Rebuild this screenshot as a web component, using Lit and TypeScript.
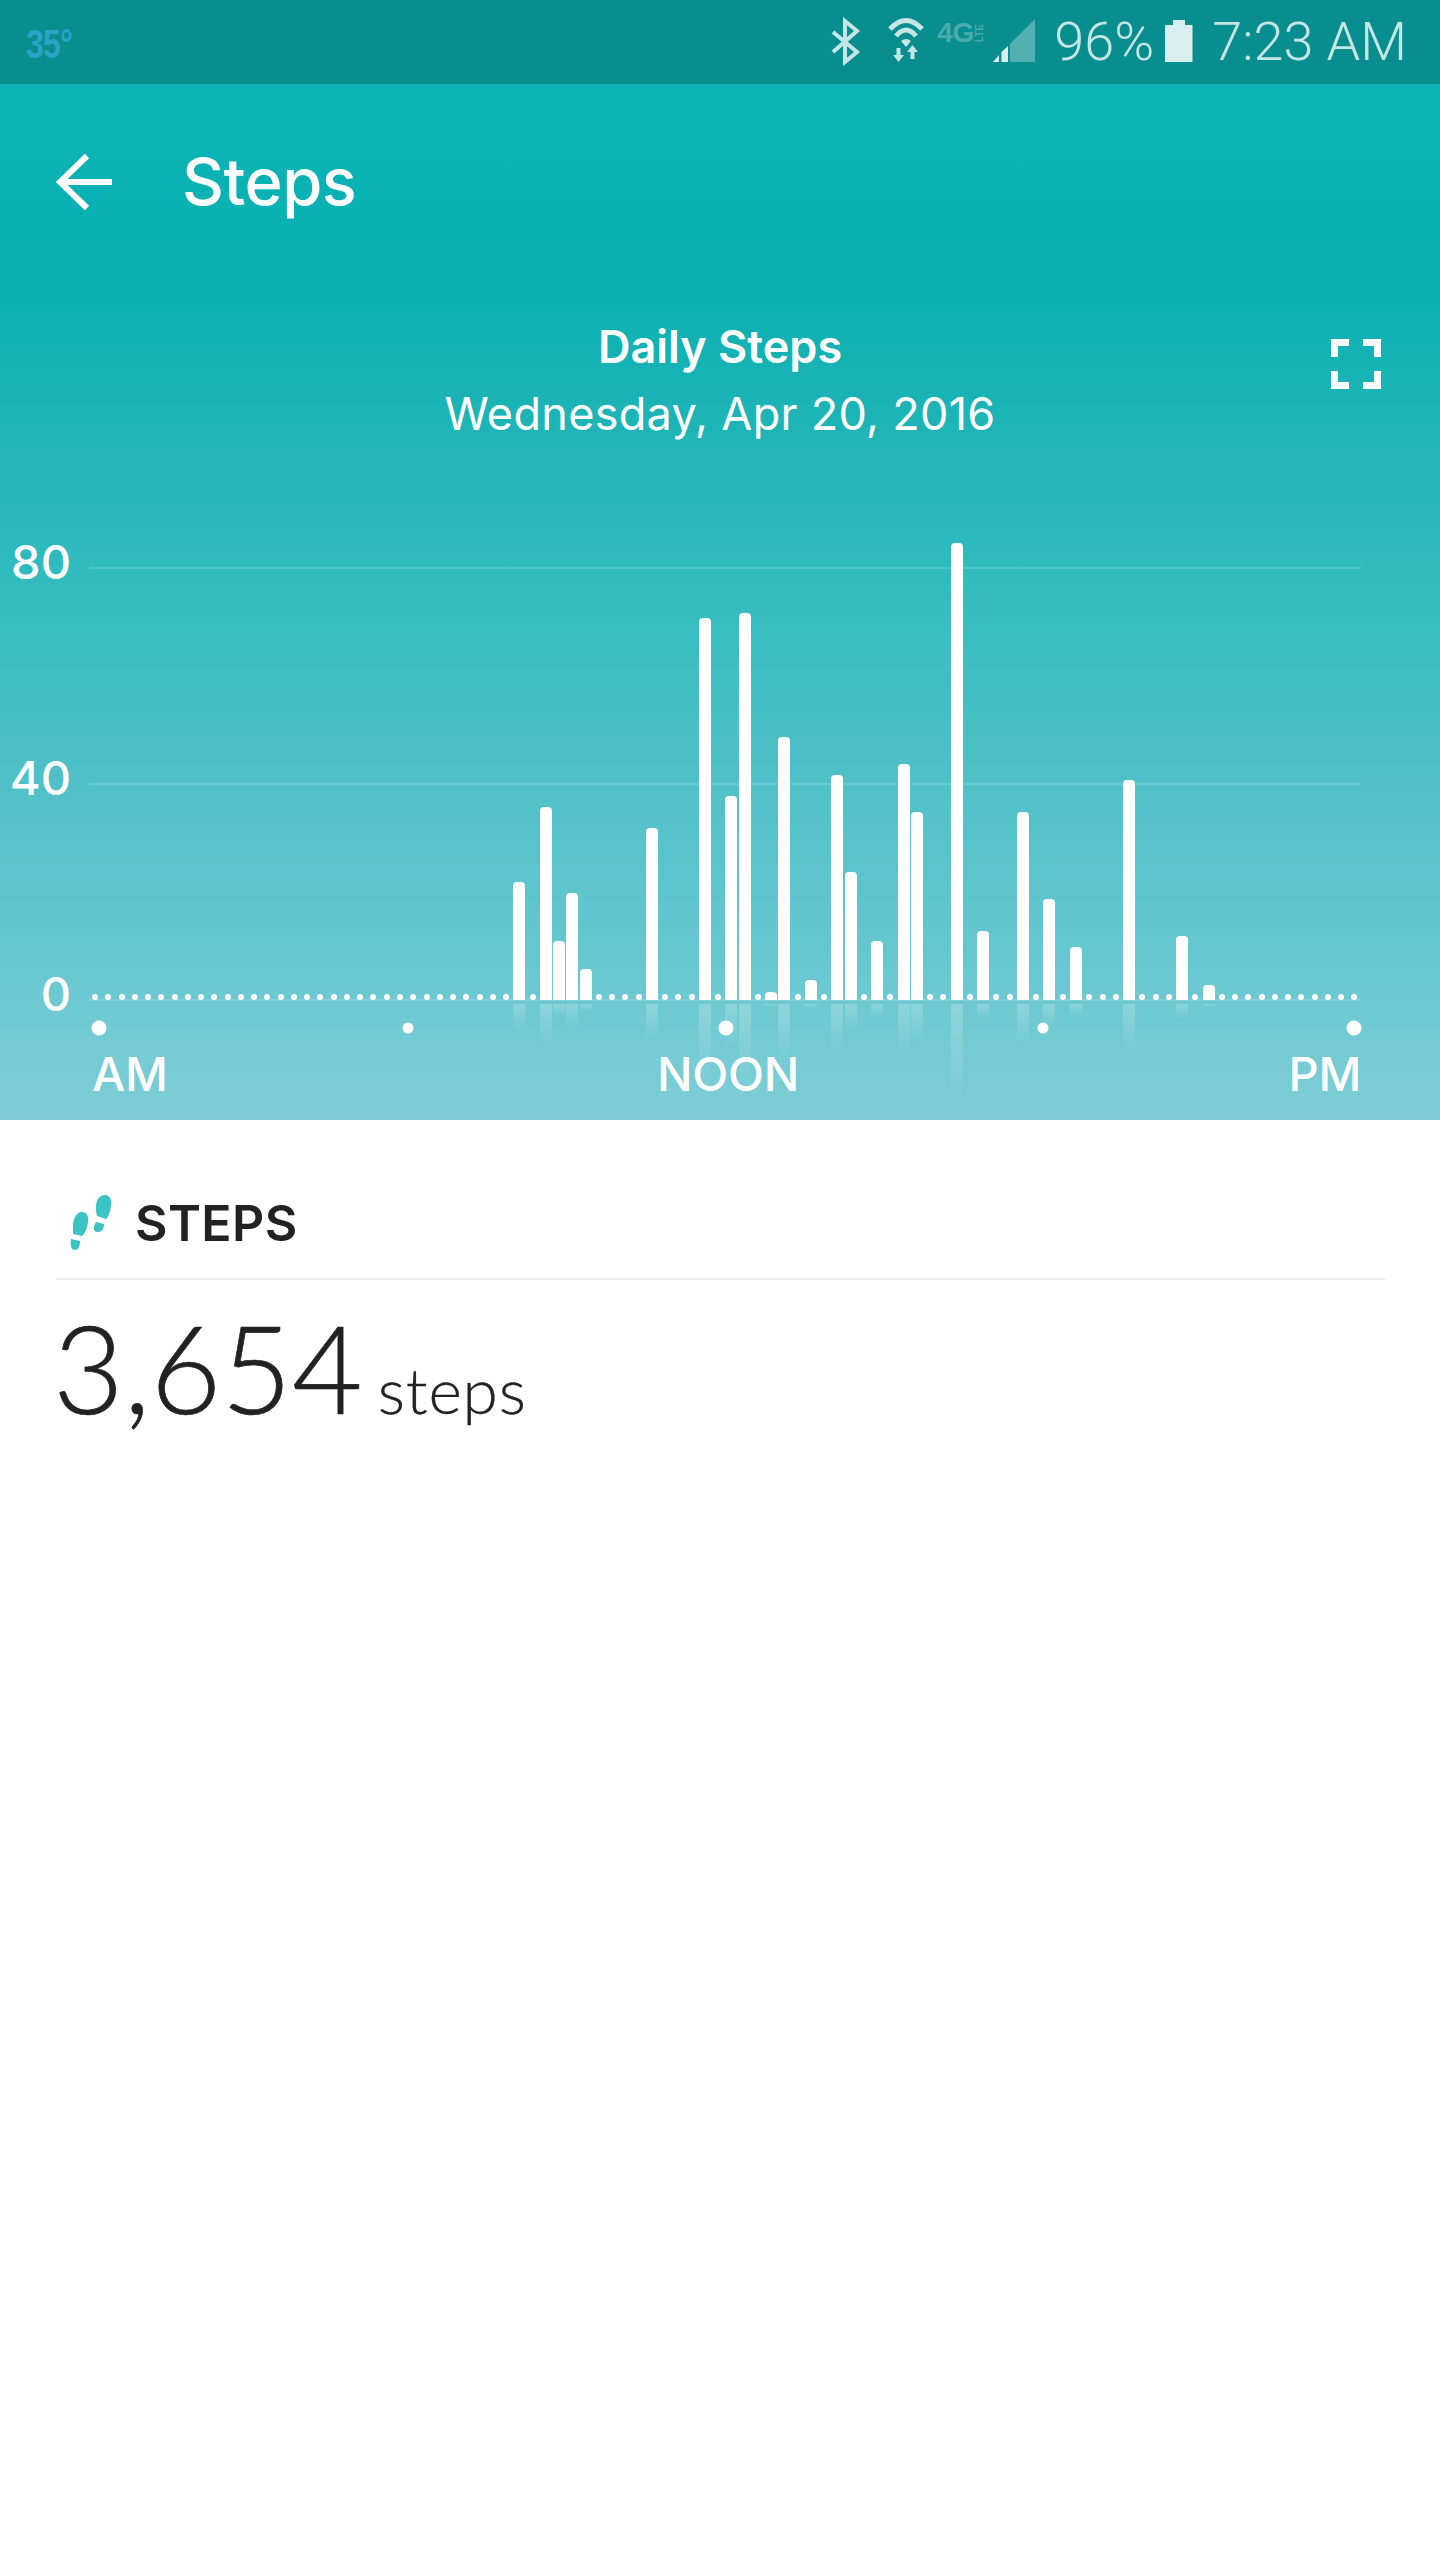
import { LitElement, html, css, svg } from "lit";
import { customElement } from "lit/decorators.js";

const BARS: Record<number, number> = {
  32: 118, 34: 193, 35: 59, 36: 107, 37: 31, 42: 172, 46: 382, 48: 204, 49: 387,
  51: 8, 52: 263, 54: 20, 56: 225, 57: 128, 59: 59, 61: 236, 62: 188, 65: 457,
  67: 69, 70: 188, 72: 101, 74: 53, 78: 220, 82: 64, 84: 15,
};
const COLS = Array.from({ length: 96 }, (_, i) => BARS[i] ?? 0);
const TICKS: [number, boolean][] = [[98.5, true], [408, false], [725.5, true], [1043, false], [1353.5, true]];

@customElement("app-root")
export class AppRoot extends LitElement {
  static styles = css`
    :host { display: block; width: 1440px; height: 2560px; background: #fff; font-family: Inter, Lato, sans-serif; overflow: hidden; }
    .status { height: 84px; background: #098e8f; display: flex; align-items: flex-start; position: relative; }
    .temp { font-family: "Liberation Sans", sans-serif; font-weight: 700; font-size: 40px; line-height: 40px; color: #2ba3c6; margin: 24px 0 0 26px; transform: scaleX(.8); transform-origin: left top; letter-spacing: -1px; }
    .status-right { margin-left: auto; display: flex; align-items: flex-start; height: 84px; }
    .sicon { display: block; }
    .stext { font-family: Roboto, sans-serif; font-weight: 300; font-size: 54px; line-height: 84px; color: #c6e6e6; white-space: nowrap; }
    .lte { display: flex; align-items: flex-start; margin: 20px 0 0 0; color: #4aacac; width: 47px; height: 24px; }
    .lte b { font-family: "Liberation Sans", sans-serif; font-weight: 700; font-size: 28px; line-height: 26px; letter-spacing: -.5px; width: 39px; }
    .lte i { font-family: "Liberation Sans", sans-serif; font-style: normal; font-weight: 700; font-size: 10px; line-height: 8px; writing-mode: vertical-rl; transform: rotate(180deg); margin-top: 4px; }
    .hero { height: 1036px; background: linear-gradient(180deg, #0ab4b5 0%, #0ab0b1 19%, #1ab3b5 30%, #34bcc0 50%, #4fc0c7 67%, #66c7cf 83.6%, #7ecdd6 100%); color: #fff; display: flex; flex-direction: column; }
    .bar-top { height: 196px; display: flex; align-items: center; padding-left: 56px; }
    .back { display: block; margin-right: 68px; }
    .title { font-size: 65px; line-height: 72px; font-weight: 500; letter-spacing: -.5px; }
    .heading { position: relative; height: 125px; text-align: center; padding-top: 38px; }
    .h1 { font-size: 45px; line-height: 58px; font-weight: 600; }
    .h2 { font-size: 45px; line-height: 58px; font-weight: 400; margin-top: 9px; letter-spacing: .3px; }
    .expand { position: absolute; left: 1331px; top: 59px; }
    .plot { position: relative; margin: 99px 0 0 89px; width: 1272px; height: 458px; }
    .cols { display: grid; grid-template-columns: repeat(96, 1fr); height: 458px; align-items: end; margin-left: -.5px; }
    .col { position: relative; display: flex; justify-content: center; }
    .bar { width: 12px; background: #fff; border-radius: 4px 4px 0 0; }
    .dot { width: 6px; height: 6px; border-radius: 50%; background: #fff; }
    .refl { position: absolute; top: calc(100% + 4px); left: 50%; margin-left: -6px; width: 12px; background: linear-gradient(180deg, rgba(255,255,255,.22), rgba(255,255,255,0)); }
    .grid { position: absolute; left: 0; right: 0; height: 2px; background: rgba(255,255,255,.14); }
    .base { position: absolute; left: 0; right: 0; top: 457px; height: 2px; background: rgba(255,255,255,.14); }
    .ylab { position: absolute; right: 100%; margin-right: 18px; font-size: 47px; line-height: 44px; font-weight: 500; }
    .ticks { position: relative; height: 20px; margin-top: 18px; }
    .tick { position: absolute; background: #fff; border-radius: 50%; transform: translate(-50%, -50%); top: 10px; }
    .tick.big { width: 15px; height: 15px; }
    .tick.small { width: 11px; height: 11px; }
    .axis { display: flex; justify-content: space-between; margin: 14px 79px 0 92px; font-size: 47px; line-height: 44px; font-weight: 500; letter-spacing: -.3px; }
    .section { padding: 0 55px 0 56px; }
    .sec-head { height: 160px; display: flex; align-items: center; border-bottom: 2px solid #ececec; padding-top: 48px; box-sizing: border-box; }
    .sec-head svg { display: block; margin-left: 13px; margin-right: 22px; }
    .sec-title { font-size: 50px; line-height: 56px; font-weight: 600; color: #222; letter-spacing: .4px; }
    .value { display: flex; align-items: baseline; color: #222; margin-top: 17px; font-family: Lato, sans-serif; font-weight: 300; margin-left: -3px; }
    .num { font-size: 122px; line-height: 140px; -webkit-text-stroke: .7px #222; }
    .unit { font-size: 64px; line-height: 70px; margin-left: 15px; letter-spacing: .8px; -webkit-text-stroke: .3px #222; }
  `;

  render() {
    return html`
      <div class="status">
        <div class="temp">35°</div>
        <div class="status-right">
          <svg class="sicon" width="108" height="84" viewBox="830 0 108 84">
            ${svg`<path d="M834 32 L858 52 L846 62 V21 L858 31 L834 52" fill="none" stroke="#c6e6e6" stroke-width="4"/>
            <path d="M891 29 Q907 12 923 29 M897 36 Q907 24 917 36" fill="none" stroke="#c6e6e6" stroke-width="5"/>
            <path d="M902 41 Q907 37 912 41 L907 47 Z" fill="#c6e6e6"/>
            <path d="M897.500 48 H901.500 V55 H905 L899.500 62 L894 55 H897.500 Z M911.500 59 H915.500 V52 H919 L913.500 45 L908 52 H911.500 Z" fill="#c6e6e6"/>`}
          </svg>
          <div class="lte"><b>4G</b><i>LTE</i></div>
          <svg class="sicon" width="43" height="84" viewBox="995 0 43 84" style="margin-left:9px">
            ${svg`<path d="M995 62 L1001 55 V62 Z M1003.500 62 V52 L1010 46 V62 Z" fill="#d9eeee"/>
            <path d="M1012 62 V44 L1037 19 V62 Z" fill="#52b0b0"/>`}
          </svg>
          <div class="stext" style="margin-left:18px">96%</div>
          <svg class="sicon" width="28" height="84" viewBox="1165 0 28 84" style="margin-left:11px">
            ${svg`<path d="M1173 20 H1185 V25 H1192.500 V62 H1165 V25 H1173 Z" fill="#d9eeee"/>`}
          </svg>
          <div class="stext" style="margin-left:19px;margin-right:33px">7:23 AM</div>
        </div>
      </div>
      <div class="hero">
        <div class="bar-top">
          <svg class="back" width="58" height="58" viewBox="0 0 58 58">
            ${svg`<path d="M56 29 H5 M31 3 L4 29 L31 55" fill="none" stroke="#fff" stroke-width="6"/>`}
          </svg>
          <div class="title">Steps</div>
        </div>
        <div class="heading">
          <div class="h1">Daily Steps</div>
          <div class="h2">Wednesday, Apr 20, 2016</div>
          <svg class="expand" width="50" height="50" viewBox="0 0 50 50">
            ${svg`<path d="M3.500 18 V3.500 H18 M32 3.500 H46.500 V18 M46.500 32 V46.500 H32 M18 46.500 H3.500 V32" fill="none" stroke="#fff" stroke-width="7"/>`}
          </svg>
        </div>
        <div class="plot">
          <div class="grid" style="top:25px"></div>
          <div class="grid" style="top:241px"></div>
          <div class="base"></div>
          <div class="ylab" style="top:-2px">80</div>
          <div class="ylab" style="top:214px">40</div>
          <div class="ylab" style="top:430px">0</div>
          <div class="cols">
            ${COLS.map((h) => html`<div class="col">
              ${h
                ? html`<div class="bar" style="height:${h}px"></div>
                    <div class="refl" style="height:${Math.round(h * 0.22)}px"></div>`
                : html`<div class="dot"></div>`}
            </div>`)}
          </div>
        </div>
        <div class="ticks">
          ${TICKS.map(([x, big]) => html`<div class="tick ${big ? "big" : "small"}" style="left:${x}px"></div>`)}
        </div>
        <div class="axis"><span>AM</span><span>NOON</span><span>PM</span></div>
      </div>
      <div class="section">
        <div class="sec-head">
          <svg width="44" height="58" viewBox="69 1196 44 58">
            ${svg`<path d="M96 1209 C96 1201 100 1197 105 1197 C110 1197 112 1202 111 1208 C110 1214 109 1218 106 1221 L97 1218 C96 1215 96 1212 96 1209 Z" fill="#3cc3c3"/>
            <path d="M96 1224 L104 1226 C104 1231 102 1234 98 1234 C95 1234 93 1232 94 1228 Z" fill="#3cc3c3"/>
            <path d="M73 1228 C73 1220 77 1214 82 1214 C87 1214 89 1219 88 1224 C87 1231 85 1235 82 1238 L73 1236 C73 1233 73 1231 73 1228 Z" fill="#3cc3c3"/>
            <path d="M71 1241 L80 1243 C80 1249 78 1252 75 1252 C71 1252 70 1248 71 1241 Z" fill="#3cc3c3"/>`}
          </svg>
          <div class="sec-title">STEPS</div>
        </div>
        <div class="value"><span class="num">3,654</span><span class="unit">steps</span></div>
      </div>
    `;
  }
}
